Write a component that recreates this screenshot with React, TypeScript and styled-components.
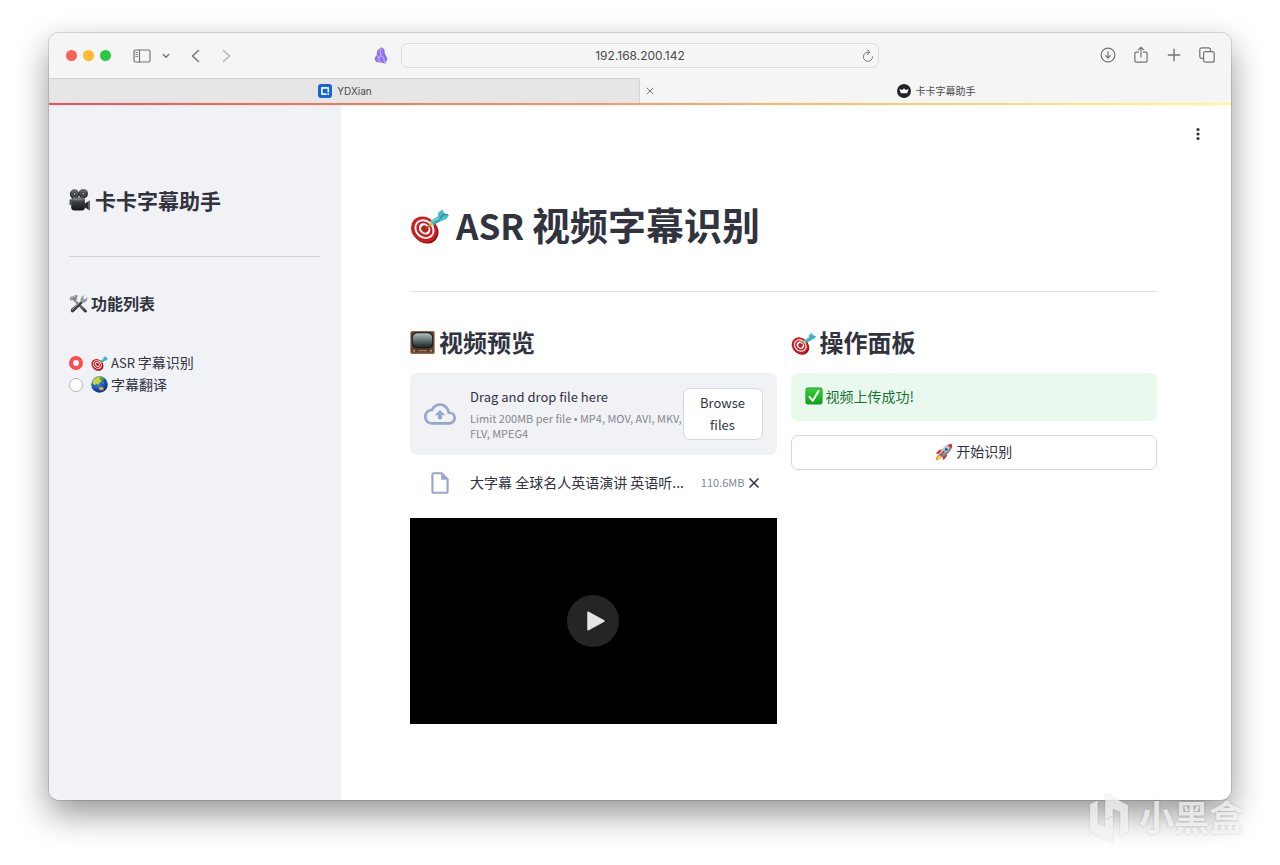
import React, { useState } from 'react';
import styled, { createGlobalStyle } from 'styled-components';

const GlobalStyle = createGlobalStyle`
  *, *::before, *::after { box-sizing: border-box; }
  body { margin: 0; background: #fff; }
  button, input { font: inherit; color: inherit; }
  h1, h2, h3, p { margin: 0; }
`;

const uiFont = `Inter, "Noto Sans CJK SC", sans-serif`;
const appFont = `"Noto Sans CJK SC", sans-serif`;

const Desktop = styled.div`
  position: relative;
  display: flex;
  min-height: 100vh;
  padding: 33px 49px 65px;
  overflow: hidden;
`;

const Window = styled.div`
  flex: 1;
  min-width: 0;
  display: flex;
  flex-direction: column;
  overflow: hidden;
  border-radius: 10px;
  background: #fff;
  box-shadow: 0 0 0 1px rgba(0, 0, 0, 0.12), 0 14px 34px rgba(0, 0, 0, 0.42);
`;

const Toolbar = styled.header`
  display: grid;
  grid-template-columns: 1fr minmax(0, 478px) 1fr;
  align-items: center;
  height: 45px;
  background: #f5f5f5;
  font-family: ${uiFont};
`;

const ToolGroup = styled.div<{ $end?: boolean }>`
  display: flex;
  align-items: center;
  justify-content: ${(p) => (p.$end ? 'flex-end' : 'flex-start')};
  gap: ${(p) => (p.$end ? '13px' : '0')};
  padding: ${(p) => (p.$end ? '0 14px 1px 0' : '0 12px 0 17px')};
`;

const Lights = styled.div`
  display: flex;
  gap: 6px;
  margin-right: 20px;
`;

const Light = styled.button<{ $color: string }>`
  width: 11px;
  height: 11px;
  padding: 0;
  border: 0;
  border-radius: 50%;
  background: ${(p) => p.$color};
`;

const IconButton = styled.button<{ $w?: number; $faint?: boolean }>`
  display: flex;
  align-items: center;
  justify-content: center;
  width: ${(p) => p.$w ?? 20}px;
  height: 20px;
  padding: 0;
  border: 0;
  background: none;
  color: ${(p) => (p.$faint ? '#b4b4b4' : '#747474')};
`;

const Spring = styled.span`
  flex: 1;
`;

const Address = styled.div`
  display: flex;
  align-items: center;
  height: 25px;
  padding: 0 0 0 20px;
  border: 1px solid #dcdcdc;
  border-radius: 6px;
`;

const AddressInput = styled.input`
  flex: 1;
  min-width: 0;
  padding: 0;
  border: 0;
  outline: 0;
  background: none;
  font-size: 12px;
  line-height: 16px;
  text-align: center;
  color: #4a4a4a;
`;

const TabBar = styled.nav`
  display: flex;
  height: 25px;
  font-family: ${uiFont};
`;

const Tab = styled.div<{ $active?: boolean }>`
  flex: 1;
  display: flex;
  align-items: center;
  padding: 0 18px 0 0;
  background: ${(p) => (p.$active ? '#f5f5f5' : '#e6e6e6')};
  border: 1px solid ${(p) => (p.$active ? '#f5f5f5' : '#d2d2d2')};
  border-width: 1px 1px 0 0;
`;

const TabSide = styled.span`
  display: flex;
  width: 20px;
`;

const TabLink = styled.a`
  flex: 1;
  display: flex;
  align-items: center;
  justify-content: center;
  gap: 5px;
  font-size: 10px;
  line-height: 14px;
  color: #4a4a4a;
  text-decoration: none;
`;

const Rainbow = styled.div`
  height: 2px;
  background: linear-gradient(90deg, #ff4b4b, #ff8a5c 40%, #fffd80);
`;

const Body = styled.div`
  flex: 1;
  display: flex;
  font-family: ${appFont};
  color: #31333f;
`;

const Sidebar = styled.aside`
  flex: none;
  width: 292px;
  padding: 80px 21px 40px 20px;
  background: #f0f2f6;
`;

const SideTitle = styled.h2`
  display: flex;
  align-items: center;
  gap: 4px;
  font-size: 21px;
  line-height: 30px;
  font-weight: 700;
`;

const SideRule = styled.hr`
  margin: 41px 0 34px;
  border: 0;
  border-top: 1px solid #d0d3d9;
`;

const SideSubtitle = styled.h3`
  display: flex;
  align-items: center;
  gap: 3px;
  font-size: 16px;
  line-height: 24px;
  font-weight: 700;
`;

const RadioList = styled.fieldset`
  margin: 37px 0 0;
  padding: 0;
  border: 0;
`;

const RadioRow = styled.label`
  display: flex;
  align-items: center;
  height: 22px;
  font-size: 14px;
  line-height: 20px;
`;

const Radio = styled.input`
  appearance: none;
  width: 14px;
  height: 14px;
  margin: 0 8px 0 0;
  border: 1px solid #b5b7bf;
  border-radius: 50%;
  background: #fff;
  &:checked {
    border: 4px solid #ff4b4b;
  }
`;

const RadioText = styled.span`
  display: flex;
  align-items: center;
  gap: 3px;
  padding-bottom: 2px;
`;

const Main = styled.main`
  flex: 1;
  min-width: 0;
`;

const MainHeader = styled.div`
  display: flex;
  justify-content: flex-end;
  align-items: center;
  height: 58px;
  padding-right: 23px;
`;

const Content = styled.div`
  padding: 32px 74px 70px 69px;
`;

const PageTitle = styled.h1`
  display: flex;
  align-items: center;
  gap: 7px;
  height: 58px;
  font-size: 38px;
  line-height: 58px;
  font-weight: 700;
`;

const Latin = styled.span<{ $size: number }>`
  font-size: ${(p) => p.$size}px;
`;

const Rule = styled.hr`
  margin: 38px 0 33px;
  border: 0;
  border-top: 1px solid #e3e4e7;
`;

const Columns = styled.div`
  display: grid;
  grid-template-columns: 1fr 1fr;
  gap: 14px;
`;

const Column = styled.section`
  min-width: 0;
  display: flex;
  flex-direction: column;
  gap: 14px;
`;

const SectionTitle = styled.h2`
  display: flex;
  align-items: center;
  gap: 4px;
  height: 34px;
  font-size: 24px;
  line-height: 36px;
  font-weight: 700;
`;

const Uploader = styled.div`
  display: flex;
  align-items: center;
  padding: 13px 14px;
  border-radius: 7px;
  background: #f0f2f6;
`;

const IconSlot = styled.span`
  flex: none;
  display: flex;
  justify-content: center;
  width: 32px;
  margin-right: 14px;
`;

const UploadText = styled.div`
  flex: 1;
  min-width: 0;
  padding-bottom: 1px;
`;

const UploadLead = styled.p`
  margin-bottom: 3px;
  font-size: 13px;
  line-height: 22px;
`;

const UploadHint = styled.p`
  margin-right: -2px;
  font-family: "Noto Sans CJK KR", sans-serif;
  font-size: 11px;
  line-height: 15px;
  color: #85878f;
`;

const Button = styled.button<{ $width?: string }>`
  display: flex;
  align-items: center;
  justify-content: center;
  gap: 3px;
  flex: none;
  width: ${(p) => p.$width ?? '100%'};
  padding: ${(p) => (p.$width ? '3px 12px' : '4px 12px 6px')};
  border: 1px solid #d6d7db;
  border-radius: 7px;
  background: #fff;
  font-size: ${(p) => (p.$width ? '13px' : '14px')};
  line-height: ${(p) => (p.$width ? '22px' : '23px')};
`;

const FileRow = styled.div`
  display: flex;
  align-items: center;
  height: 28px;
  padding: 0 14px;
`;

const FileName = styled.span`
  flex: 1;
  min-width: 0;
  overflow: hidden;
  white-space: nowrap;
  padding-bottom: 3px;
  font-size: 14px;
  line-height: 22px;
`;

const FileSize = styled.span`
  font-size: 11px;
  line-height: 16px;
  padding-bottom: 2px;
  color: #85878f;
`;

const Player = styled.div`
  display: flex;
  align-items: center;
  justify-content: center;
  aspect-ratio: 16 / 9;
  margin-top: 7px;
  background: #000;
`;

const PlayButton = styled.button`
  display: flex;
  align-items: center;
  justify-content: center;
  width: 52px;
  height: 52px;
  padding: 0 0 0 6px;
  border: 0;
  border-radius: 50%;
  background: #252525;
`;

const Success = styled.div`
  display: flex;
  align-items: center;
  gap: 3px;
  padding: 12px 14px 14px;
  border-radius: 7px;
  background: #e9f9ee;
  color: #177233;
  font-size: 14px;
  line-height: 22px;
`;

const Watermark = styled.div`
  position: absolute;
  right: 36px;
  bottom: 20px;
  display: flex;
  align-items: center;
  gap: 10px;
  color: rgba(255, 255, 255, 0.72);
  font-family: ${appFont};
  font-size: 35px;
  font-weight: 700;
  line-height: 50px;
  text-shadow: 0 0 3px rgba(0, 0, 0, 0.18);
`;

const WatermarkText = styled.span`
  padding-bottom: 4px;
`;

const WatermarkLogo = styled.svg`
  overflow: visible;
  filter: drop-shadow(0 0 1px rgba(0, 0, 0, 0.2));
`;

const DefsSvg = styled.svg`
  position: absolute;
  width: 0;
  height: 0;
`;

const EmojiSvg = styled.svg`
  flex: none;
  display: block;
`;

function SharedGradients() {
  return (
    <DefsSvg aria-hidden="true">
      <defs>
        <radialGradient id="ocean" cx="0.35" cy="0.3" r="0.8">
          <stop offset="0" stopColor="#5aa2f5" />
          <stop offset="0.5" stopColor="#2257c4" />
          <stop offset="1" stopColor="#0c2370" />
        </radialGradient>
        <linearGradient id="screen" x1="0" y1="0" x2="0" y2="1">
          <stop offset="0" stopColor="#b4c2bf" />
          <stop offset="0.45" stopColor="#6b7c7a" />
          <stop offset="1" stopColor="#1c2627" />
        </linearGradient>
        <linearGradient id="tick" x1="0" y1="0" x2="0" y2="1">
          <stop offset="0" stopColor="#3ccf3c" />
          <stop offset="1" stopColor="#0aa514" />
        </linearGradient>
        <linearGradient id="camera" x1="0" y1="0" x2="0" y2="1">
          <stop offset="0" stopColor="#6b7072" />
          <stop offset="0.45" stopColor="#34383a" />
          <stop offset="1" stopColor="#15181a" />
        </linearGradient>
        <linearGradient id="steel" x1="0" y1="0" x2="1" y2="1">
          <stop offset="0" stopColor="#b4b8ba" />
          <stop offset="0.5" stopColor="#6a6f72" />
          <stop offset="1" stopColor="#2a2d30" />
        </linearGradient>
      </defs>
    </DefsSvg>
  );
}

const emojiArt: Record<string, React.ReactNode> = {
  dart: (
    <>
      <ellipse cx="16" cy="26.500" rx="14" ry="12.300" transform="rotate(42 16 26.500)" fill="#8d1013" />
      <ellipse cx="14.500" cy="25" rx="14.200" ry="12.400" transform="rotate(42 14.500 25)" fill="#cf1c20" />
      <ellipse cx="14.800" cy="24.800" rx="11" ry="9.400" transform="rotate(42 14.800 24.800)" fill="#fff" />
      <ellipse cx="14.800" cy="24.800" rx="9" ry="7.500" transform="rotate(42 14.800 24.800)" fill="#cb1f24" />
      <ellipse cx="15" cy="24.600" rx="6.400" ry="5.200" transform="rotate(42 15 24.600)" fill="#fff" />
      <ellipse cx="15.200" cy="24.600" rx="4" ry="3.300" transform="rotate(42 15.200 24.600)" fill="#c21b20" />
      <path d="M16 24.500L22 20" stroke="#7d5a25" strokeWidth="1.600" />
      <path d="M19.500 22l1.500-5.500 4 4z" fill="#dcc14e" />
      <path d="M21 16.500L29 11.500l4.500 4L24.500 20.500z" fill="#2fa9b5" />
      <path d="M21 16.500L29 11.500l2 2L22.500 18.500z" fill="#62d0d6" />
      <path d="M28.500 12.500l.700-5L33.500 4.500l1.500 4.500 5 1.500-3 4-5.500 2z" fill="#47bcc6" />
      <path d="M30.500 14l4.500-5M35 9l4 1.300" stroke="#1f8794" strokeWidth="1.100" />
    </>
  ),
  camera: (
    <>
      <circle cx="10" cy="9" r="8.500" fill="url(#camera)" />
      <circle cx="26" cy="8.500" r="8.500" fill="url(#camera)" />
      <circle cx="10" cy="9" r="5" fill="none" stroke="#7c8284" strokeWidth="1.200" />
      <circle cx="26" cy="8.500" r="5" fill="none" stroke="#7c8284" strokeWidth="1.200" />
      <circle cx="10" cy="9" r="1.800" fill="#a9aeb0" />
      <circle cx="26" cy="8.500" r="1.800" fill="#a9aeb0" />
      <rect x="4" y="15" width="25" height="24" rx="6" fill="url(#camera)" />
      <rect x="7" y="17.500" width="18" height="3" rx="1.500" fill="#7c8284" />
      <path d="M1 19h5v10H1z" fill="#4c5052" />
      <path d="M28 27l10-6v18l-10-6z" fill="#2a2d2f" />
      <path d="M35 23l3-2v18l-3-2z" fill="#6b7072" />
    </>
  ),
  tools: (
    <>
      <path d="M13 11 L37 34 Q39 37 36.500 38.500 Q33 39.500 31 37 L9 14 Z" fill="url(#steel)" />
      <path d="M2 9 Q3 4 9 4 L16 1.500 L19 4 L16 8 L17 11 L11 16 L7 12 L3 14 Z" fill="#85898c" />
      <path d="M4 9 Q7 5 15 4" stroke="#d9dcde" strokeWidth="1.500" fill="none" />
      <path d="M27 13 L31 17 L11 37 Q8 40 4.500 38 Q2.500 34 5 31 Z" fill="#3d4144" />
      <path d="M27 13 L6 34" stroke="#a7abad" strokeWidth="2" />
      <path d="M25 16 Q22 7 32 2 L29.500 8 L33 11.500 L39 7 Q39 18 28 19 Z" fill="#94999c" />
    </>
  ),
  globe: (
    <>
      <circle cx="20" cy="20" r="19.500" fill="url(#ocean)" />
      <path d="M4 12 Q9 2 22 1 L28 3 L24 8 L26 12 L20 15 L18 20 L13 18 L9 21 L4 18 Z" fill="#c8d43a" />
      <path d="M20 2 L32 5 L28 12 L22 10 Z" fill="#4b9d36" />
      <path d="M17 28 Q23 23 29 27 L30 32 L23 34 Z" fill="#c9b43c" />
      <path d="M28 13 L31 16 L28 19 Z" fill="#6db447" />
      <path d="M14 20 L17 25 L15 26 Z" fill="#5aa744" />
    </>
  ),
  tv: (
    <>
      <rect x="0.500" y="1.500" width="39" height="37" rx="3" fill="#8f6650" />
      <rect x="2" y="3" width="36" height="33" rx="2" fill="#5d4033" />
      <rect x="3" y="3.500" width="34" height="26" rx="8" fill="#1f1b1a" />
      <rect x="4.500" y="5" width="31" height="22.500" rx="8" fill="url(#screen)" />
      <rect x="4" y="31" width="32" height="4.500" fill="#5b3a2c" />
      <path d="M13 33.200h14" stroke="#b98562" strokeWidth="1.600" />
      <circle cx="6.500" cy="33.200" r="1.500" fill="#d9b08b" />
      <circle cx="33.500" cy="33.200" r="1.500" fill="#d9b08b" />
    </>
  ),
  check: (
    <>
      <rect x="1" y="1" width="38" height="38" rx="6" fill="#14901c" />
      <rect x="2.500" y="2.500" width="35" height="35" rx="4.500" fill="url(#tick)" />
      <path d="M10 22 L17 31 L30 9" fill="none" stroke="#fff" strokeWidth="4.500" strokeLinecap="round" strokeLinejoin="round" />
    </>
  ),
  rocket: (
    <>
      <path d="M10 25 Q2 28 2 38 Q10 39 15 31 Z" fill="#f58b1f" />
      <path d="M10 28 Q5 31 5 36 Q10 36 13 31 Z" fill="#ffd84a" />
      <path d="M16 14 Q7 14 2 24 L11 24 Z" fill="#d5332c" />
      <path d="M27 24 Q27 33 18 38 L16 29 Z" fill="#d5332c" />
      <path d="M38 2 Q23 2 15 15 L9 25 L15 31 L26 25 Q39 16 38 2 Z" fill="#b6c3cf" />
      <path d="M38 2 Q38 16 26 25 L15 31 L12 28 Q30 19 38 2 Z" fill="#74879b" />
      <path d="M38 2 Q33 2 28 4 Q31 10 36.500 12 Q38.500 7 38 2 Z" fill="#d5332c" />
      <circle cx="25" cy="14.500" r="4.500" fill="#2c5f9f" stroke="#eef3f7" strokeWidth="1.500" />
      <path d="M12 27 L20 19" stroke="#c22d27" strokeWidth="3" strokeLinecap="round" />
    </>
  ),
};

function Emoji({ name, size }: { name: string; size: number }) {
  return (
    <EmojiSvg width={size} height={size} viewBox="0 0 40 40" aria-hidden="true">
      {emojiArt[name]}
    </EmojiSvg>
  );
}

function Line({ w, h, box, sw = 1.2, children }: { w: number; h: number; box: string; sw?: number; children: React.ReactNode }) {
  return (
    <svg width={w} height={h} viewBox={box} fill="none" stroke="currentColor" strokeWidth={sw} strokeLinecap="round" strokeLinejoin="round" aria-hidden="true">
      {children}
    </svg>
  );
}

function BrowserToolbar() {
  return (
    <Toolbar>
      <ToolGroup>
        <Lights>
          <Light $color="#ff5f57" aria-label="Close window" />
          <Light $color="#febc2e" aria-label="Minimize window" />
          <Light $color="#28c840" aria-label="Zoom window" />
        </Lights>
        <IconButton $w={22} aria-label="Sidebar">
          <Line w={18} h={14} box="0 0 18 14">
            <rect x="1" y="1" width="16" height="12" rx="1.500" />
            <path d="M6.500 1v12" />
            <path d="M2.800 3.500h1.800M2.800 5.500h1.800M2.800 7.500h1.800" strokeWidth="0.900" />
          </Line>
        </IconButton>
        <IconButton $w={26} aria-label="Tab groups">
          <Line w={8} h={6} box="0 0 8 6" sw={1.400}>
            <path d="M1.300 1.500L4 4.200l2.700-2.700" />
          </Line>
        </IconButton>
        <IconButton $w={32} aria-label="Back">
          <Line w={9} h={14} box="0 0 9 14" sw={1.500}>
            <path d="M7.500 1.500L1.500 7l6 5.500" />
          </Line>
        </IconButton>
        <IconButton $w={30} $faint aria-label="Forward">
          <Line w={9} h={14} box="0 0 9 14" sw={1.500}>
            <path d="M1.500 1.500l6 5.500-6 5.500" />
          </Line>
        </IconButton>
        <Spring />
        <IconButton $w={16} aria-label="Obsidian">
          <svg width="14" height="17" viewBox="0 0 14 17" aria-hidden="true">
            <path d="M7.500 0.300L10.300 2.300 10.800 6.300 13.600 12 11.300 16.700 7 15.500 2 15 0.400 11.500 2.600 8 3.300 3.500Z" fill="#9174f0" />
            <path d="M7.200 1.500L6.200 5 6.800 8.500 5 11.200 5 15M6.800 8.500l2.800 2 1 5.500M2.800 8L5 11.200" fill="none" stroke="#ded4fc" strokeWidth="0.700" />
          </svg>
        </IconButton>
      </ToolGroup>
      <Address>
        <AddressInput aria-label="Address" defaultValue="192.168.200.142" />
        <IconButton aria-label="Reload">
          <Line w={12} h={14} box="0 0 12 14" sw={1}>
            <path d="M6.800 3.200A4.600 4.600 0 1 0 10.600 7.800" />
            <path d="M5.300 0.900L7.800 3.200 5.500 5.600" />
          </Line>
        </IconButton>
      </Address>
      <ToolGroup $end>
        <IconButton aria-label="Downloads">
          <Line w={16} h={16} box="0 0 16 16">
            <circle cx="8" cy="8" r="6.900" />
            <path d="M8 4.500v6.500M5.500 8.600L8 11.100l2.500-2.500" />
          </Line>
        </IconButton>
        <IconButton aria-label="Share">
          <Line w={14} h={18} box="0 0 14 18">
            <path d="M4.500 6.200H2.200Q0.900 6.200 0.900 7.500v7.300q0 1.300 1.300 1.300h9.600q1.300 0 1.300-1.300V7.500q0-1.300-1.300-1.300H9.500" />
            <path d="M7 11V1.200M4.300 3.800L7 1.100l2.700 2.700" />
          </Line>
        </IconButton>
        <IconButton aria-label="New tab">
          <Line w={14} h={14} box="0 0 14 14" sw={1.400}>
            <path d="M7 1.300v11.400M1.300 7h11.400" />
          </Line>
        </IconButton>
        <IconButton aria-label="Tab overview">
          <Line w={16} h={16} box="0 0 16 16">
            <rect x="4.600" y="4.600" width="10.600" height="10.600" rx="2" />
            <path d="M4.600 11.400H2.800q-2 0-2-2V2.800q0-2 2-2h6.600q2 0 2 2v1.800" />
          </Line>
        </IconButton>
      </ToolGroup>
    </Toolbar>
  );
}

function BrowserTabs() {
  return (
    <TabBar>
      <Tab>
        <TabSide />
        <TabLink href="#ydxian">
          <svg width="14" height="14" viewBox="0 0 14 14" aria-hidden="true">
            <rect width="14" height="14" rx="3" fill="#1565d8" />
            <path d="M10.300 8.500V3.900H3.900v6.200h4.600" fill="none" stroke="#fff" strokeWidth="1.600" strokeLinejoin="round" />
            <circle cx="10.200" cy="10.200" r="0.900" fill="#fff" />
          </svg>
          YDXian
        </TabLink>
      </Tab>
      <Tab $active>
        <TabSide>
          <IconButton aria-label="Close tab">
            <Line w={8} h={8} box="0 0 8 8" sw={1}>
              <path d="M1 1l6 6M7 1L1 7" />
            </Line>
          </IconButton>
        </TabSide>
        <TabLink href="#kaka">
          <svg width="14" height="14" viewBox="0 0 14 14" aria-hidden="true">
            <circle cx="7" cy="7" r="7" fill="#22222c" />
            <path d="M2.400 5l2.600 1.100L7 4.600l2 1.500L11.600 5l-1.400 4.300H3.800z" fill="#fff" />
          </svg>
          卡卡字幕助手
        </TabLink>
      </Tab>
    </TabBar>
  );
}

const features = [
  { id: 'asr', icon: 'dart', latin: 'ASR', label: '字幕识别' },
  { id: 'translate', icon: 'globe', latin: '', label: '字幕翻译' },
];

function FeatureSidebar() {
  const [feature, setFeature] = useState('asr');
  return (
    <Sidebar>
      <SideTitle>
        <Emoji name="camera" size={22} />
        卡卡字幕助手
      </SideTitle>
      <SideRule />
      <SideSubtitle>
        <Emoji name="tools" size={19} />
        功能列表
      </SideSubtitle>
      <RadioList aria-label="功能列表">
        {features.map((f) => (
          <RadioRow key={f.id}>
            <Radio type="radio" name="feature" checked={feature === f.id} onChange={() => setFeature(f.id)} />
            <RadioText>
              <Emoji name={f.icon} size={17} />
              <span>
                {f.latin && <Latin $size={13}>{f.latin} </Latin>}
                {f.label}
              </span>
            </RadioText>
          </RadioRow>
        ))}
      </RadioList>
    </Sidebar>
  );
}

function VideoPreview() {
  return (
    <Column>
      <SectionTitle>
        <Emoji name="tv" size={25} />
        视频预览
      </SectionTitle>
      <Uploader>
        <IconSlot>
          <svg width="32" height="32" viewBox="0 0 24 24" fill="#98a6c9" aria-hidden="true">
            <path d="M19.350 10.040C18.670 6.590 15.640 4 12 4 9.110 4 6.600 5.640 5.350 8.040 2.340 8.360 0 10.910 0 14c0 3.310 2.690 6 6 6h13c2.760 0 5-2.240 5-5 0-2.640-2.050-4.780-4.650-4.960zM19 18H6c-2.210 0-4-1.790-4-4 0-2.050 1.530-3.760 3.560-3.970l1.070-.11.500-.95A5.469 5.469 0 0 1 12 6c2.620 0 4.880 1.860 5.390 4.430l.3 1.500 1.530.11A2.980 2.980 0 0 1 22 15c0 1.650-1.350 3-3 3zM8 13h2.550v3h2.900v-3H16l-4-4z" />
          </svg>
        </IconSlot>
        <UploadText>
          <UploadLead>Drag and drop file here</UploadLead>
          <UploadHint>Limit 200MB per file • MP4, MOV, AVI, MKV, FLV, MPEG4</UploadHint>
        </UploadText>
        <Button $width="80px">Browse files</Button>
      </Uploader>
      <FileRow>
        <IconSlot>
          <svg width="26" height="26" viewBox="0 0 24 24" fill="#98a6c9" aria-hidden="true">
            <path d="M6 2c-1.100 0-1.990.9-1.990 2L4 20c0 1.100.890 2 1.990 2H18c1.100 0 2-.9 2-2V8l-6-6H6zm0 2h7v5h5v11H6V4z" />
          </svg>
        </IconSlot>
        <FileName>大字幕 全球名人英语演讲 英语听...</FileName>
        <FileSize>110.6MB</FileSize>
        <IconButton $w={18} aria-label="Remove file">
          <svg width="10" height="10" viewBox="0 0 10 10" stroke="#31333f" strokeWidth="1.500" aria-hidden="true">
            <path d="M0.500 0.500l9 9M9.500 0.500l-9 9" />
          </svg>
        </IconButton>
      </FileRow>
      <Player>
        <PlayButton aria-label="Play">
          <svg width="18" height="20" viewBox="0 0 18 20" aria-hidden="true">
            <path d="M1 1.200v17.600L17 10z" fill="#e6e6e6" stroke="#e6e6e6" strokeWidth="1.500" strokeLinejoin="round" />
          </svg>
        </PlayButton>
      </Player>
    </Column>
  );
}

function ActionPanel() {
  return (
    <Column>
      <SectionTitle>
        <Emoji name="dart" size={25} />
        操作面板
      </SectionTitle>
      <Success role="status">
        <Emoji name="check" size={18} />
        视频上传成功!
      </Success>
      <Button>
        <Emoji name="rocket" size={18} />
        开始识别
      </Button>
    </Column>
  );
}

export default function App() {
  return (
    <Desktop>
      <GlobalStyle />
      <SharedGradients />
      <Window>
        <BrowserToolbar />
        <BrowserTabs />
        <Rainbow />
        <Body>
          <FeatureSidebar />
          <Main>
            <MainHeader>
              <IconButton aria-label="Main menu">
                <svg width="4" height="14" viewBox="0 0 4 14" fill="#31333f" aria-hidden="true">
                  <circle cx="2" cy="2.500" r="1.600" />
                  <circle cx="2" cy="7" r="1.600" />
                  <circle cx="2" cy="11.500" r="1.600" />
                </svg>
              </IconButton>
            </MainHeader>
            <Content>
              <PageTitle>
                <Emoji name="dart" size={39} />
                <span>
                  <Latin $size={35}>ASR </Latin>视频字幕识别
                </span>
              </PageTitle>
              <Rule />
              <Columns>
                <VideoPreview />
                <ActionPanel />
              </Columns>
            </Content>
          </Main>
        </Body>
      </Window>
      <Watermark>
        <WatermarkLogo width="40" height="50" viewBox="0 0 40 53" fill="currentColor" aria-hidden="true">
          <path d="M0 12L8 8v25l8 3v-7l8-4v28L0 40z" />
          <path d="M40 41l-8 4V20l-8-3v7l-8 4V0l24 13z" />
        </WatermarkLogo>
        <WatermarkText>小黑盒</WatermarkText>
      </Watermark>
    </Desktop>
  );
}
